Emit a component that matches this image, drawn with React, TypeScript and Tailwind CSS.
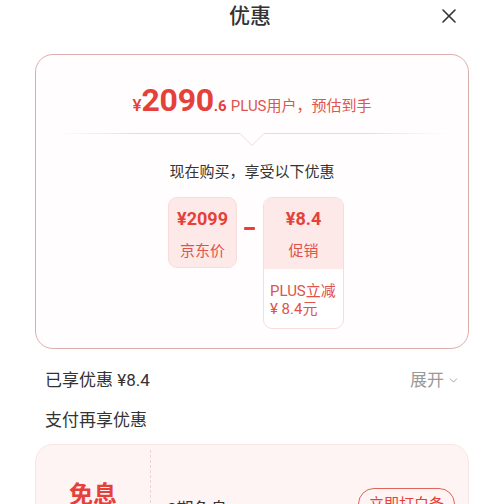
import { X, ChevronDown } from "lucide-react";

const font = { fontFamily: 'Roboto, "Noto Sans CJK SC", sans-serif' };

function Notch() {
  return (
    <svg width="394" height="14" viewBox="0 0 394 14" className="mx-auto block">
      <defs>
        <linearGradient id="fade" x1="0" x2="1" y1="0" y2="0">
          <stop offset="0" stopColor="#f6e3e1" stopOpacity="0" />
          <stop offset="0.2" stopColor="#f1d8d6" />
          <stop offset="0.8" stopColor="#f1d8d6" />
          <stop offset="1" stopColor="#f6e3e1" stopOpacity="0" />
        </linearGradient>
      </defs>
      <path
        d="M0 0.5 H185 L197 12.5 L209 0.5 H394"
        fill="none"
        stroke="url(#fade)"
        strokeWidth="1"
      />
    </svg>
  );
}

export default function App() {
  return (
    <div className="h-[504px] w-[500px] overflow-hidden bg-white" style={font}>
      <header className="relative flex h-[32px] items-center justify-center">
        <h1 className="text-[21px] leading-[32px] font-medium text-[#333]">优惠</h1>
        <X
          className="absolute top-[4px] right-[39px] text-[#333]"
          size={24}
          strokeWidth={1.6}
        />
      </header>

      <section className="mt-[22px] ml-[35px] h-[295px] w-[434px] rounded-[18px] border border-[#dcaeaa] bg-[#fffdfd]">
        <div className="mt-[25px] flex h-[40px] items-baseline justify-center text-[#e5403a]">
          <span className="text-[17px] font-medium">¥</span>
          <span className="text-[32px] leading-[40px] font-bold tracking-[-0.3px]">2090</span>
          <span className="text-[15px] font-bold">.6</span>
          <span className="ml-[4px] text-[15px] text-[#dd564f]">PLUS用户，预估到手</span>
        </div>

        <div className="mt-[13px]">
          <Notch />
        </div>

        <p className="mt-[14px] text-center text-[15px] leading-[22px] text-[#333]">
          现在购买，享受以下优惠
        </p>

        <div className="mt-[14px] ml-[132px] flex items-start">
          <div className="flex h-[71px] w-[69px] flex-col items-center rounded-[9px] border border-[#f8dcdb] bg-[#fde9e8] pt-[9px]">
            <span className="text-[18px] leading-[24px] font-bold text-[#e5403a]">¥2099</span>
            <span className="mt-[9px] text-[15px] leading-[22px] text-[#e1524a]">京东价</span>
          </div>

          <div className="mx-[7px] mt-[30px] h-[3px] w-[11px] rounded-[1px] bg-[#e5403a]" />

          <div className="ml-[1px] h-[132px] w-[81px] overflow-hidden rounded-[9px] border border-[#f8dcdb] bg-white">
            <div className="flex h-[71px] flex-col items-center bg-[#fde9e8] pt-[9px]">
              <span className="text-[18px] leading-[24px] font-bold text-[#e5403a]">¥8.4</span>
              <span className="mt-[9px] text-[15px] leading-[22px] text-[#e1524a]">促销</span>
            </div>
            <div className="pt-[13px] pl-[6px] text-[15px] leading-[18px] text-[#e1524a]">
              <p>PLUS立减</p>
              <p>¥ 8.4元</p>
            </div>
          </div>
        </div>
      </section>

      <div className="mt-[19px] flex h-[24px] items-center justify-between pr-[40px] pl-[45px]">
        <span className="text-[17px] leading-[24px] text-[#333]">已享优惠 ¥8.4</span>
        <span className="flex items-center gap-[3px] text-[17px] leading-[24px] text-[#999]">
          展开
          <ChevronDown size={13} strokeWidth={1.6} />
        </span>
      </div>

      <p className="mt-[16px] pl-[45px] text-[17px] leading-[24px] text-[#333]">支付再享优惠</p>

      <section className="mt-[12px] ml-[35px] flex h-[120px] w-[434px] rounded-[18px] border border-[#f8e6e4] bg-[#fdf4f3]">
        <div className="mt-[5px] flex w-[115px] justify-center border-r border-dashed border-[#efd3d1] pt-[30px]">
          <span className="text-[24px] leading-[30px] font-bold text-[#e5403a]">免息</span>
        </div>
        <div className="flex flex-1 items-start justify-between pr-[13px] pl-[16px]">
          <span className="mt-[52px] text-[17px] leading-[24px] text-[#333]">3期免息</span>
          <button className="mt-[43px] h-[32px] w-[97px] rounded-full border border-[#e0645c] text-[15px] text-[#e5403a]">
            立即打白条
          </button>
        </div>
      </section>
    </div>
  );
}
